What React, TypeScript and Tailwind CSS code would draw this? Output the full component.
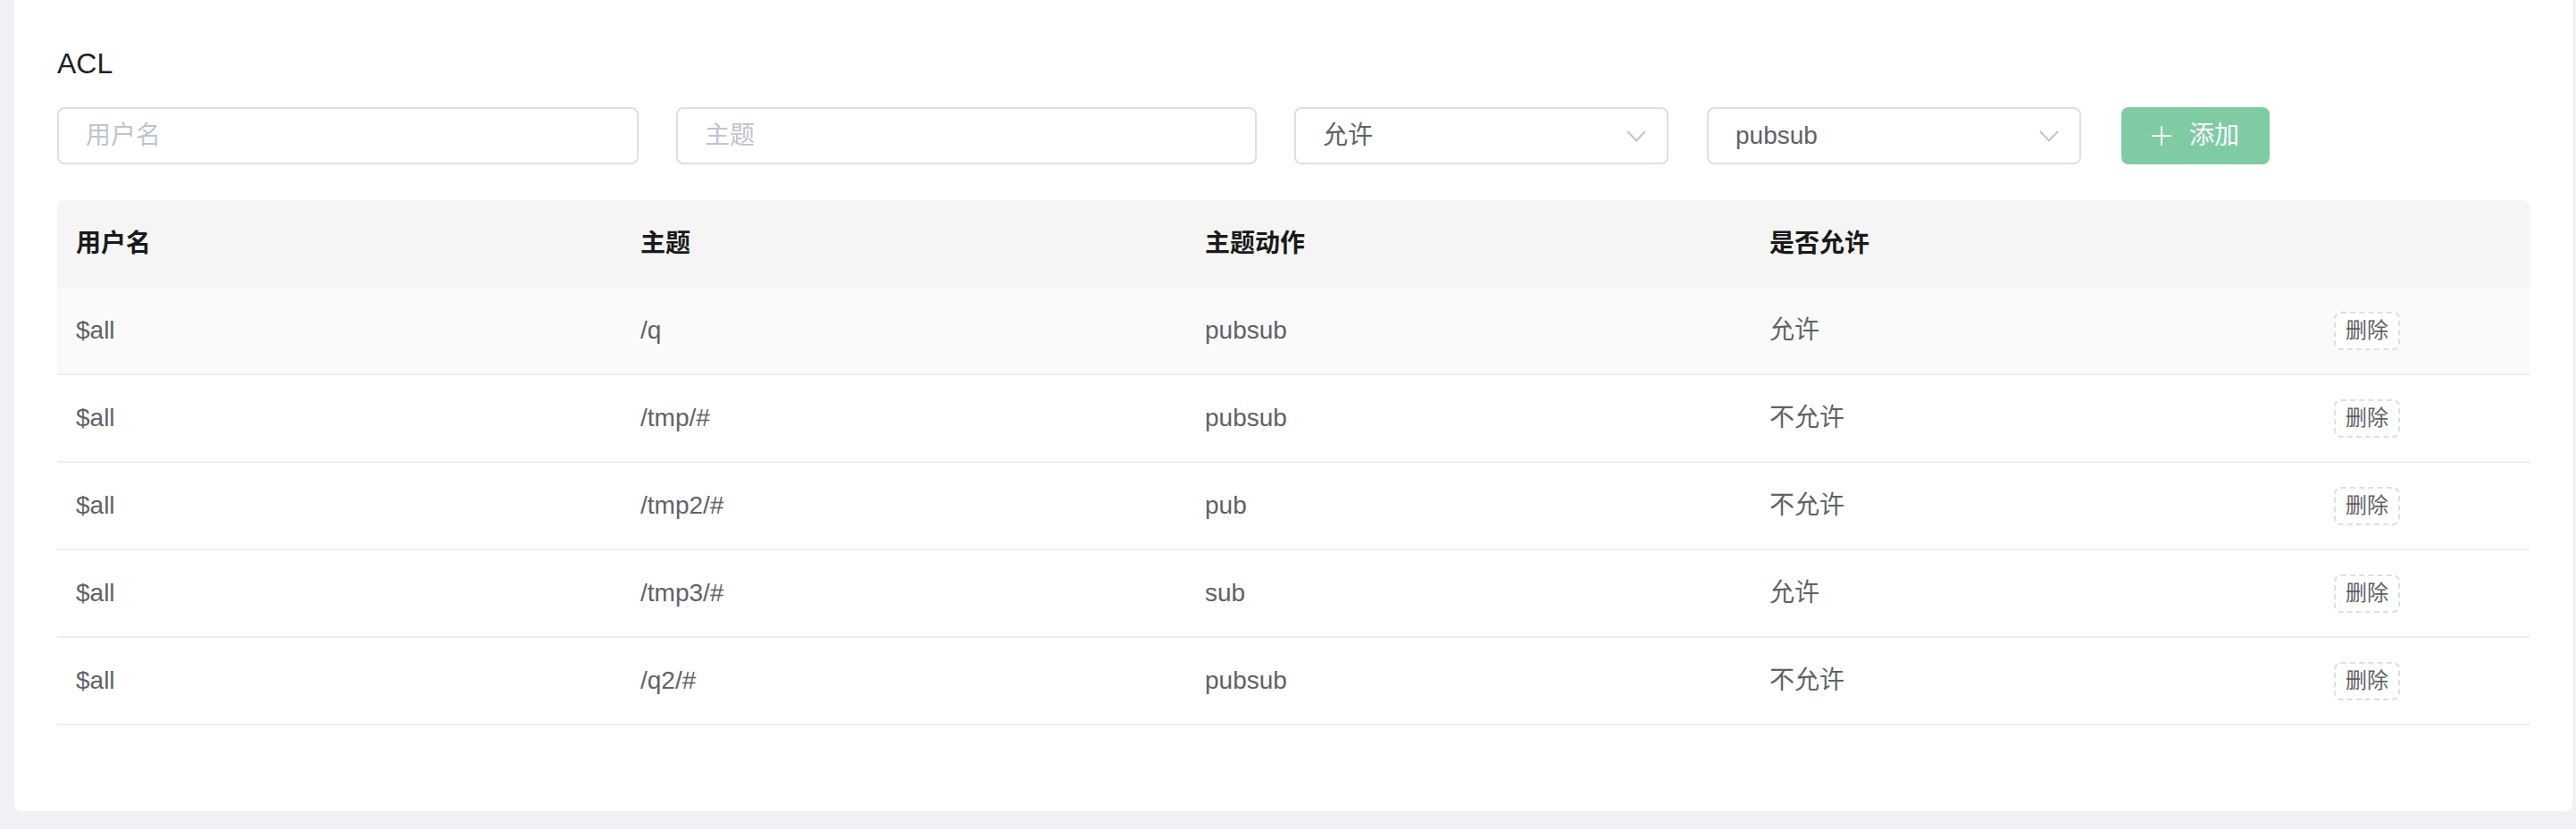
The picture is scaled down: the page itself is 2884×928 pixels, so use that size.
import { useState } from "react";

type Rule = {
  username: string;
  topic: string;
  action: string;
  allow: boolean;
};

const rules: Rule[] = [
  { username: "$all", topic: "/q", action: "pubsub", allow: true },
  { username: "$all", topic: "/tmp/#", action: "pubsub", allow: false },
  { username: "$all", topic: "/tmp2/#", action: "pub", allow: false },
  { username: "$all", topic: "/tmp3/#", action: "sub", allow: true },
  { username: "$all", topic: "/q2/#", action: "pubsub", allow: false },
];

const font = "font-['Liberation_Sans','Noto_Sans_CJK_SC',sans-serif]";

function Chevron() {
  return (
    <svg width="22" height="13" viewBox="0 0 22 13" fill="none" className="shrink-0">
      <path d="M1 1l10 10.5L21 1" stroke="#c0c4cc" strokeWidth="2" />
    </svg>
  );
}

function SelectBox({ value }: { value: string }) {
  return (
    <div className="flex h-[64px] w-[419px] items-center justify-between rounded-[8px] border-2 border-[#dcdfe6] bg-white pl-[30px] pr-[23px] text-[28px] text-[#606266]">
      <span>{value}</span>
      <Chevron />
    </div>
  );
}

export default function App() {
  const [user, setUser] = useState("");
  const [topic, setTopic] = useState("");

  return (
    <div className={`h-[928px] w-[2884px] bg-[#f0f2f5] ${font}`}>
      <div className="ml-[16px] mr-[4px] h-[908px] rounded-b-[8px] bg-white px-[48px] pt-[47px]">
        <h2 className="text-[32px] leading-[48px] text-[#1f1f1f]">ACL</h2>

        {/* add rule form */}
        <div className="mt-[25px] flex items-center">
          <input
            value={user}
            onChange={(e) => setUser(e.target.value)}
            placeholder="用户名"
            className="h-[64px] w-[651px] rounded-[8px] border-2 border-[#dcdfe6] px-[30px] text-[28px] text-[#606266] outline-none placeholder:text-[#c0c4cc]"
          />
          <input
            value={topic}
            onChange={(e) => setTopic(e.target.value)}
            placeholder="主题"
            className="ml-[42px] h-[64px] w-[650px] rounded-[8px] border-2 border-[#dcdfe6] px-[30px] text-[28px] text-[#606266] outline-none placeholder:text-[#c0c4cc]"
          />
          <div className="ml-[42px]">
            <SelectBox value="允许" />
          </div>
          <div className="ml-[43px]">
            <SelectBox value="pubsub" />
          </div>
          <button
            disabled
            className="ml-[45px] flex h-[64px] w-[166px] items-center justify-center gap-[20px] rounded-[8px] bg-[#7fcca4] text-[28px] text-white"
          >
            <svg width="22" height="22" viewBox="0 0 22 22">
              <path d="M11 0v22M0 11h22" stroke="white" strokeWidth="2" />
            </svg>
            <span>添加</span>
          </button>
        </div>

        {/* rules table */}
        <div className="mt-[40px] w-[2768px] text-[28px]">
          <div className="grid h-[98px] grid-cols-[632px_632px_632px_632px_1fr] items-center rounded-t-[8px] bg-[#f5f5f5] font-bold text-[#1a1a1a]">
            <div className="pl-[21px]">用户名</div>
            <div className="pl-[21px]">主题</div>
            <div className="pl-[21px]">主题动作</div>
            <div className="pl-[21px]">是否允许</div>
            <div />
          </div>
          {rules.map((r, i) => (
            <div
              key={i}
              className={`grid h-[98px] grid-cols-[632px_632px_632px_632px_1fr] items-center border-b-2 border-[#ebeef5] text-[#606266] ${
                i === 0 ? "bg-[#fafafa]" : "bg-white"
              }`}
            >
              <div className="pl-[21px]">{r.username}</div>
              <div className="pl-[21px]">{r.topic}</div>
              <div className="pl-[21px]">{r.action}</div>
              <div className="pl-[21px]">{r.allow ? "允许" : "不允许"}</div>
              <div className="pl-[21px]">
                <button className="flex h-[43px] w-[74px] items-center justify-center rounded-[8px] border-2 border-dashed border-[#dcdfe6] bg-white text-[24px] text-[#606266]">
                  删除
                </button>
              </div>
            </div>
          ))}
        </div>
      </div>
    </div>
  );
}
